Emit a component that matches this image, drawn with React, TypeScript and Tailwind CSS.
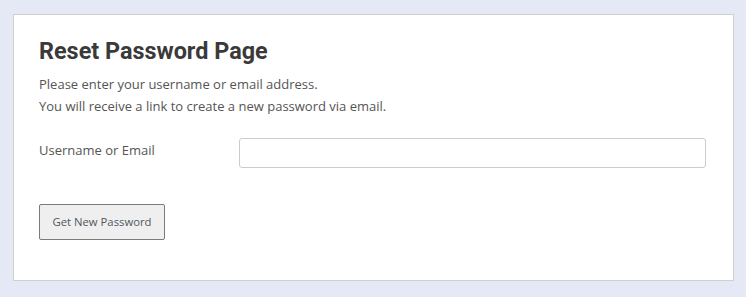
export default function App() {
  return (
    <div className="w-[746px] h-[297px] bg-[#e5e9f5] pt-[14px] pl-[13px] pr-[12px] font-['Open_Sans',sans-serif]">
      <div className="h-[267px] bg-white border border-[#cfcfcf] px-[25px] pt-[20px]">
        <h1 className="font-['Roboto',sans-serif] font-bold text-[23.4px] leading-[32px] text-[#3a3a3a]">
          Reset Password Page
        </h1>
        <div className="mt-[6px] text-[13px] leading-[22px] text-[#555]">
          <p>Please enter your username or email address.</p>
          <p>You will receive a link to create a new password via email.</p>
        </div>
        <div className="mt-[21px] flex items-start">
          <label className="w-[200px] text-[13px] leading-[24px] text-[#555]">Username or Email</label>
          <input className="w-[467px] h-[30px] border border-[#cccccc] rounded-[3px] outline-none" />
        </div>
        <button className="mt-[36px] h-[36px] w-[126px] bg-[#efefef] border border-[#7a7a7a] rounded-[2px] text-[11.3px] text-[#50575e]">
          Get New Password
        </button>
      </div>
    </div>
  );
}
